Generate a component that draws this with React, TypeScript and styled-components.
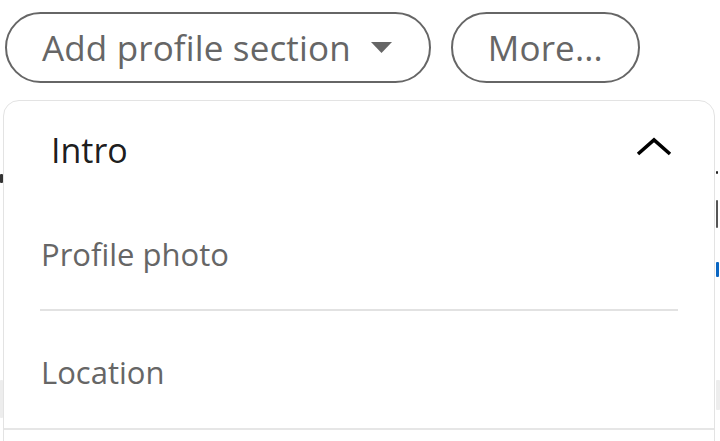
import React from "react";
import styled, { createGlobalStyle } from "styled-components";

const GlobalStyle = createGlobalStyle`
    html, body {
        margin: 0;
        padding: 0;
        background: #ffffff;
        font-family: "Open Sans", "Noto Sans", Arial, sans-serif;
        overflow: hidden;
    }
`;

const Page = styled.div`
    position: relative;
    width: 720px;
    height: 441px;
    overflow: hidden;
    background: #ffffff;
`;

const ActionBar = styled.div`
    display: flex;
    gap: 20px;
    padding: 12px 0 0 5px;
`;

const PillButton = styled.button<{ $withCaret?: boolean }>`
    display: flex;
    align-items: center;
    gap: 20px;
    height: 71px;
    padding: 0 ${({ $withCaret }) => ($withCaret ? 37 : 35)}px 0 35px;
    border: 2px solid #666666;
    border-radius: 36px;
    background: #ffffff;
    color: #666666;
    font-family: inherit;
    font-size: 35px;
    font-weight: 500;
    letter-spacing: 0.15px;
    cursor: pointer;
`;

const Caret = styled.svg`
    width: 21px;
    height: 11px;
    fill: #666666;
`;

/* the profile page that peeks out on both sides of the open menu */
const Behind = styled.div`
    position: absolute;
    top: 100px;
    left: 0;
    right: 0;
    bottom: 0;
    display: flex;
    justify-content: space-between;
    pointer-events: none;
`;

const EdgeColumn = styled.div`
    display: flex;
    flex-direction: column;
    width: 4px;
`;

const Peek = styled.span<{ $gap: number; $h: number; $w?: number; $c: string }>`
    display: block;
    margin-top: ${({ $gap }) => $gap}px;
    width: ${({ $w }) => $w ?? 4}px;
    height: ${({ $h }) => $h}px;
    background: ${({ $c }) => $c};
    border-radius: 1px;
`;

const Menu = styled.div`
    position: absolute;
    left: 3px;
    top: 100px;
    width: 712px;
    height: 400px;
    background: #ffffff;
    border: 1.5px solid #e3e3e3;
    border-radius: 16px;
    box-sizing: border-box;
`;

const SectionHeader = styled.div`
    display: flex;
    align-items: center;
    justify-content: space-between;
    height: 97px;
    padding: 0 42px 0 47px;
    color: rgba(0, 0, 0, 0.9);
    font-size: 34px;
    font-weight: 500;
`;

const Chevron = styled.svg`
    width: 36px;
    height: 20px;
    margin-top: -6px;
    fill: none;
    stroke: #000000;
    stroke-width: 3.6;
`;

const Item = styled.div`
    display: flex;
    align-items: center;
    height: 111px;
    margin: 0 36px;
    padding-left: 1px;
    border-bottom: 2px solid #e2e2e2;
    color: #666666;
    font-size: 31px;
    font-weight: 500;

    &:last-child {
        height: 119px;
        margin: 0;
        padding: 5px 0 0 37px;
        box-sizing: border-box;
        border-bottom-color: #e6e6e6;
    }
`;

const App: React.FC = () => {
    const items = ["Profile photo", "Location"];

    return (
        <Page>
            <GlobalStyle />
            <ActionBar>
                <PillButton $withCaret>
                    Add profile section
                    <Caret viewBox="0 0 21 11">
                        <path d="M0 0 H21 L10.5 11 Z" />
                    </Caret>
                </PillButton>
                <PillButton>More...</PillButton>
            </ActionBar>

            <Behind>
                <EdgeColumn>
                    <Peek $gap={74} $h={9} $w={3} $c="#333333" />
                    <Peek $gap={197} $h={38} $w={3} $c="#ededed" />
                </EdgeColumn>
                <EdgeColumn>
                    <Peek $gap={71} $h={3} $w={2} $c="#222222" />
                    <Peek $gap={26} $h={28} $w={2} $c="#555555" />
                    <Peek $gap={34} $h={15} $w={3} $c="#0a66c2" />
                    <Peek $gap={103} $h={30} $c="#ededed" />
                </EdgeColumn>
            </Behind>

            <Menu>
                <SectionHeader>
                    Intro
                    <Chevron viewBox="0 0 36 20">
                        <polyline points="2,17 18,3 34,17" />
                    </Chevron>
                </SectionHeader>
                {items.map((label) => (
                    <Item key={label}>{label}</Item>
                ))}
            </Menu>
        </Page>
    );
};

export default App;
